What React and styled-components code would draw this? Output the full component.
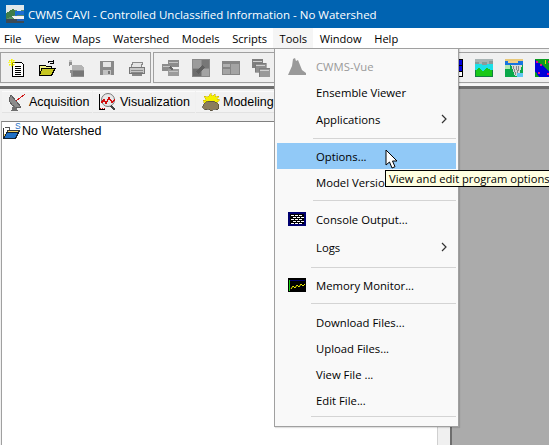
import React from "react";
import styled, { createGlobalStyle } from "styled-components";

const GlobalStyle = createGlobalStyle`
  html, body {
    margin: 0;
    padding: 0;
    background: #ababab;
  }
  * {
    box-sizing: border-box;
  }
`;

const UI_FONT = `"Open Sans", "Noto Sans", sans-serif`;
const JAVA_FONT = `"Liberation Sans", Arial, sans-serif`;

const Window = styled.div`
  position: relative;
  width: 549px;
  height: 445px;
  overflow: hidden;
  display: flex;
  flex-direction: column;
  background: #ababab;
  font-family: ${UI_FONT};
`;

const TitleBar = styled.div`
  height: 28px;
  flex: none;
  display: flex;
  align-items: center;
  gap: 4px;
  padding-left: 6px;
  background: #0063b1;
  color: #fff;
  font-size: 11.5px;
  white-space: nowrap;
`;

const MenuBar = styled.div`
  height: 20px;
  flex: none;
  display: flex;
  padding-left: 4px;
  background: #fff;
`;

const MenuTitle = styled.div`
  height: 20px;
  padding: 0 6.3px;
  display: flex;
  align-items: center;
  font-size: 11.1px;
  color: #000;
  background: ${(p) => (p.$open ? "#f5f5f5" : "transparent")};
  &:first-child {
    padding: 0 7.5px 0 0;
  }
`;

const Toolbar = styled.div`
  height: 38px;
  flex: none;
  display: flex;
  gap: 2px;
  padding-top: 3px;
  background: #f0f0f0;
  border-top: 1px solid #a0a0a0;
  border-bottom: 2px solid #f7f7f7;
`;

const ToolGroup = styled.div`
  height: 31px;
  flex: none;
  width: ${(p) => p.$width}px;
  display: flex;
  align-items: center;
  gap: 12px;
  padding-left: ${(p) => p.$pad}px;
  border: 1px solid #a0a0a0;
  border-right-width: ${(p) => (p.$open ? 0 : 1)}px;
`;

const Workspace = styled.div`
  flex: 1;
  min-height: 0;
  display: flex;
  border-top: 3px solid #6e6e6e;
`;

const LeftPane = styled.div`
  width: 437px;
  flex: none;
  display: flex;
  flex-direction: column;
  background: #f0f0f0;
`;

const TabStrip = styled.div`
  height: 32px;
  flex: none;
  display: flex;
  gap: 1px;
  padding: 2px 0 8px 2px;
`;

const Tab = styled.div`
  width: ${(p) => p.$width}px;
  display: flex;
  align-items: center;
  gap: 3px;
  padding-left: 6px;
  background: #f2f2f2;
  border-top: 1px solid #fbfbfb;
  border-bottom: 1px solid #e2e2e2;
  font-family: ${JAVA_FONT};
  font-size: 12.5px;
  color: #000;
`;

const Tree = styled.div`
  flex: 1;
  margin-left: 1px;
  padding-left: 1px;
  background: #fff;
  border-top: 1px solid #808080;
  border-left: 1px solid #a0a0a0;
`;

const TreeRow = styled.div`
  display: flex;
  align-items: center;
  gap: 1px;
  font-family: ${JAVA_FONT};
  font-size: 12.5px;
  color: #000;
`;

const Splitter = styled.div`
  width: 15px;
  flex: none;
  background: #f0f0f0;
  border-left: 1px solid #d0d0d0;
  border-right: 2px solid #6e6e6e;
`;

const Desktop = styled.div`
  flex: 1;
  background: #ababab;
`;

const PopupMenu = styled.div`
  position: absolute;
  left: 274px;
  top: 48px;
  width: 185px;
  height: 379px;
  padding: 4px 2px 0 2px;
  background: #f9f9f9;
  border: 1px solid #a0a0a0;
  box-shadow: 1px 1px 1px rgba(0, 0, 0, 0.12);
`;

const MenuRow = styled.div`
  height: ${(p) => p.$height || 26}px;
  display: flex;
  align-items: center;
  font-size: 11.3px;
  color: ${(p) => (p.$disabled ? "#9a9a9a" : "#000")};
  background: ${(p) => (p.$active ? "#91c9f7" : "transparent")};
`;

const IconSlot = styled.div`
  width: 39px;
  flex: none;
  display: flex;
  justify-content: center;
  padding-left: 1px;
`;

const RowLabel = styled.span`
  flex: 1;
  white-space: nowrap;
`;

const Chevron = styled.svg`
  width: 6px;
  height: 10px;
  margin-right: 9px;
  flex: none;
`;

const Separator = styled.div`
  height: ${(p) => p.$height || 12}px;
  display: flex;
  align-items: center;
  padding-left: ${(p) => p.$inset || 36}px;
  &::after {
    content: "";
    flex: 1;
    height: 1px;
    background: #d4d4d4;
  }
`;

const Tooltip = styled.div`
  position: absolute;
  left: 385px;
  top: 170px;
  width: 180px;
  height: 17px;
  padding-left: 3px;
  display: flex;
  align-items: center;
  background: #ffffe1;
  border: 1px solid #000;
  font-size: 11.2px;
  white-space: nowrap;
  color: #000;
`;

const Pointer = styled.svg`
  position: absolute;
  left: 385px;
  top: 149px;
  width: 14px;
  height: 21px;
`;

const Cells = ({ size = 18, view = 18, children }) => (
  <svg width={size} height={size} viewBox={`0 0 ${view} ${view}`} shapeRendering="crispEdges">
    {children}
  </svg>
);

const AppIcon = () => (
  <Cells>
    <rect width="18" height="18" fill="#5b8f6a" />
    <path d="M0 0h18v5l-6 1-5-2-7 4z" fill="#dfe8ea" />
    <path d="M0 8l7-4 5 3-5 4-7 3z" fill="#3f7d4a" />
    <path d="M9 6h9v4h-6l-3 1z" fill="#1d6fd0" />
    <path d="M6 11h12v3H8z" fill="#f2f2f2" />
    <path d="M0 14h18v4H0z" fill="#3b4a55" />
    <path d="M11 14h7v2h-7z" fill="#1e5fb5" />
  </Cells>
);

const NewIcon = () => (
  <Cells>
    <path d="M4.500 3.500h9l2 2v12h-11z" fill="#fff" stroke="#000" />
    <path d="M7 7h6M7 9h6M7 11h6M7 13h6M7 15h6" stroke="#000" />
    <path d="M0 3h7M3 0h1v7h-1zM1 1h1v1H1zM5 1h1v1H5zM1 5h1v1H1zM5 5h1v1H5z" stroke="#f4f400" fill="#f4f400" strokeWidth=".6" />
  </Cells>
);

const OpenIcon = () => (
  <Cells>
    <path d="M1.500 6.500h6l1 1h5v8h-12z" fill="#f3f388" stroke="#000" />
    <path d="M4 9.500h13l-3.500 7h-12z" fill="#c6c620" stroke="#000" />
    <path d="M10 4c1-2 3-2.500 5-1.500M15 1v3h-3" fill="none" stroke="#000" />
  </Cells>
);

const GreyOpenIcon = () => (
  <Cells>
    <path d="M1 3h3v3H2v5h14v7H3z" fill="#8f8f8f" />
    <path d="M4 6h9l3 2v3H4z" fill="#b4b4b4" />
    <path d="M1 1h3v2H1z" fill="#c8c8c8" />
    <path d="M5 12h11v5H5z" fill="#777" />
  </Cells>
);

const GreySaveIcon = () => (
  <Cells>
    <rect x="2" y="2" width="14" height="14" fill="#8a8a8a" />
    <rect x="5" y="3" width="8" height="5" fill="#e4e4e4" />
    <rect x="5" y="11" width="8" height="5" fill="#c2c2c2" />
    <rect x="10" y="12" width="2" height="3" fill="#777" />
  </Cells>
);

const GreyPrintIcon = () => (
  <Cells>
    <path d="M5 3h10l-2 5H3z" fill="#e4e4e4" stroke="#8a8a8a" />
    <path d="M1.500 8.500h15v6h-15z" fill="#c6c6c6" stroke="#777" />
    <path d="M3 11h12M3 13h12" stroke="#8a8a8a" />
    <path d="M4 15h10v1.500H4z" fill="#888" />
  </Cells>
);

const GreyLinkedIcon = () => (
  <Cells>
    <rect x="6" y="1" width="11" height="7" fill="#8c8c8c" />
    <rect x="0" y="5" width="10" height="7" fill="#8c8c8c" />
    <rect x="6" y="10" width="11" height="7" fill="#9b9b9b" />
    <path d="M7 3h9M1 7h8M7 12h9" stroke="#c4c4c4" />
    <path d="M8 8l3 3" stroke="#666" strokeWidth="2" />
  </Cells>
);

const GreyTileIcon = () => (
  <Cells>
    <rect width="18" height="18" fill="#8a8a8a" />
    <rect x="1" y="1" width="8" height="8" fill="#9c9c9c" />
    <rect x="10" y="1" width="7" height="8" fill="#777" />
    <rect x="1" y="10" width="8" height="7" fill="#6e6e6e" />
    <rect x="10" y="10" width="7" height="7" fill="#a4a4a4" />
    <path d="M4 13l6-7 3 2-6 7z" fill="#5f5f5f" />
  </Cells>
);

const GreySplitIcon = () => (
  <Cells>
    <rect y="2" width="18" height="14" fill="#868686" />
    <rect x="1" y="5" width="7" height="3" fill="#b0b0b0" />
    <rect x="1" y="10" width="7" height="5" fill="#a4a4a4" />
    <rect x="9" y="5" width="8" height="10" fill="#a4a4a4" />
  </Cells>
);

const GreyCascadeIcon = () => (
  <Cells>
    <rect y="0" width="11" height="9" fill="#7f7f7f" />
    <rect x="3" y="4" width="11" height="9" fill="#8e8e8e" stroke="#666" strokeWidth=".5" />
    <rect x="7" y="9" width="11" height="9" fill="#999" stroke="#666" strokeWidth=".5" />
    <path d="M1 2h9M4 6h9M8 11h9" stroke="#d0d0d0" />
  </Cells>
);

const GridIcon = () => (
  <Cells>
    <rect width="18" height="18" fill="#000" />
    <rect x="1" y="1" width="7" height="5" fill="#0000e0" />
    <rect x="10" y="1" width="7" height="5" fill="#0000e0" />
    <rect x="1" y="7" width="7" height="5" fill="#0000e0" />
    <rect x="10" y="7" width="7" height="5" fill="#0000e0" />
    <rect x="1" y="13" width="7" height="4" fill="#fff" />
    <rect x="10" y="13" width="7" height="4" fill="#fff" />
  </Cells>
);

const LandscapeIcon = () => (
  <Cells>
    <rect width="18" height="18" fill="#1de0e8" />
    <rect width="18" height="5" fill="#a8b4b4" />
    <path d="M0 3h4v2H0zM7 3h5v3H7zM14 2h4v3h-4z" fill="#8a9a98" />
    <path d="M0 12l4-3 4 3 4-3 6 3v6H0z" fill="#18c818" />
    <path d="M0 11h1v7H0zM17 11h1v7h-1zM0 17h18v1H0z" fill="#108040" />
  </Cells>
);

const DamIcon = () => (
  <Cells>
    <rect width="18" height="18" fill="#0aa84a" />
    <rect width="18" height="2" fill="#e8c878" />
    <rect y="2" width="18" height="4" fill="#1874e0" />
    <path d="M3 2h10v2H3z" fill="#f0d088" />
    <path d="M6 6h11l-3 11H10z" fill="#d8d8d8" />
    <path d="M8 7l3 9M11 7l2 8M14 7l-1 5" stroke="#8a8a8a" />
    <path d="M0 6h5v4H0z" fill="#b0e8b0" />
    <path d="M12 14h6v4h-6z" fill="#60c8f0" />
  </Cells>
);

const PlanIcon = () => (
  <Cells>
    <rect width="18" height="18" fill="#0a9a20" />
    <path d="M0 1l11 8 7 9H4L0 12z" fill="#0000d8" />
    <path d="M1 2h2v2H1zM5 5h2v2H5zM13 2h2v2h-2zM15 7h2v2h-2zM3 13h2v2H3zM12 14h2v2h-2z" fill="#e8008a" />
    <path d="M10 1h1v4h-1zM14 11h3v1h-3z" fill="#d8e800" />
  </Cells>
);

const DishIcon = () => (
  <Cells>
    <path d="M3 2c-2 3-2 7 1 10s7 3 9 2z" fill="#8c8c8c" stroke="#5f5f5f" />
    <path d="M5 13l-2 5h7l-2-4z" fill="#6f6f6f" />
    <path d="M8 8L17 1" stroke="#d01818" />
  </Cells>
);

const LensIcon = () => (
  <Cells>
    <circle cx="9" cy="7" r="6.500" fill="#e8e8e8" stroke="#777" shapeRendering="auto" />
    <path d="M2 10l3-3 2 3 3-5 3 4 3-2" fill="none" stroke="#d01010" strokeWidth="1.500" />
    <path d="M12 13l4 4" stroke="#444" strokeWidth="2" />
    <path d="M0 1v16M0 16h6" stroke="#000" />
    <path d="M1 15h5" stroke="#d01010" strokeDasharray="1 1" />
  </Cells>
);

const WeatherIcon = () => (
  <Cells>
    <path d="M9 0l1 3 3-2 0 3 4-1-2 3 3 1-3 2 2 3H3L1 7l3 0-2-4 4 1z" fill="#f4f000" stroke="#c8a800" strokeWidth=".5" />
    <path d="M1 15c-1-4 3-7 8-7s8 3 8 7l-2 2-3-1-3 2-3-2-3 1z" fill="#8b7d5c" stroke="#4d4636" strokeWidth=".7" />
  </Cells>
);

const WatershedIcon = () => (
  <Cells>
    <path d="M0.500 5.500v11h12l4-8H5l-3 6" fill="#f3d060" stroke="#333" />
    <path d="M0.500 16.500L4 10h12l-4 6.500z" fill="#1f6fc4" stroke="#123" />
    <path d="M2 5.500h4l1 2" fill="none" stroke="#555" />
    <text x="12" y="7" fontSize="8.500" fontFamily="Liberation Sans" fill="#1f6fc4">S</text>
  </Cells>
);

const VueIcon = () => (
  <svg width="18" height="18" viewBox="0 0 18 18">
    <path d="M0 18L4 9 5 2 7 1 8 4 10 3 12 8 14 13 18 16V18z" fill="#9a9a9a" />
  </svg>
);

const ConsoleIcon = () => (
  <Cells>
    <rect y="2" width="18" height="14" fill="#000070" />
    <rect x="2" y="4" width="14" height="10" fill="#000" />
    <path d="M3 5h12M3 9h12M3 13h12" stroke="#fff" strokeDasharray="3 1" />
    <path d="M5 7h11M5 11h11" stroke="#fff" strokeDasharray="3 1" />
  </Cells>
);

const MemoryIcon = () => (
  <Cells>
    <rect y="2" width="18" height="14" fill="#000" />
    <path d="M1 4h16" stroke="#000070" />
    <path d="M1 4v11" stroke="#18d018" />
    <path d="M3 13l2-3 2 2 2-3 2 2 2-3 2 2 2-2" fill="none" stroke="#f0f000" shapeRendering="auto" />
  </Cells>
);

const fileIcons = [
  <NewIcon key="new" />,
  <OpenIcon key="open" />,
  <GreyOpenIcon key="greyopen" />,
  <GreySaveIcon key="save" />,
  <GreyPrintIcon key="print" />,
];

const windowIcons = [
  <GreyLinkedIcon key="linked" />,
  <GreyTileIcon key="tile" />,
  <GreySplitIcon key="split" />,
  <GreyCascadeIcon key="cascade" />,
];

const dataIcons = [
  <GreySplitIcon key="a" />,
  <GreySplitIcon key="b" />,
  <GreySplitIcon key="c" />,
  <GreySplitIcon key="d" />,
  <GreySplitIcon key="e" />,
  <GridIcon key="grid" />,
  <LandscapeIcon key="land" />,
  <DamIcon key="dam" />,
  <PlanIcon key="plan" />,
];

const menus = ["File", "View", "Maps", "Watershed", "Models", "Scripts", "Tools", "Window", "Help"];

const Arrow = () => (
  <Chevron viewBox="0 0 6 10">
    <path d="M1 1l4 4-4 4" fill="none" stroke="#333" strokeWidth="1.200" />
  </Chevron>
);

function Item({ icon, label, submenu, ...rest }) {
  return (
    <MenuRow {...rest}>
      <IconSlot>{icon}</IconSlot>
      <RowLabel>{label}</RowLabel>
      {submenu && <Arrow />}
    </MenuRow>
  );
}

export default function App() {
  return (
    <Window>
      <GlobalStyle />
      <TitleBar>
        <AppIcon />
        CWMS CAVI - Controlled Unclassified Information - No Watershed
      </TitleBar>
      <MenuBar>
        {menus.map((m) => (
          <MenuTitle key={m} $open={m === "Tools"}>
            {m}
          </MenuTitle>
        ))}
      </MenuBar>
      <Toolbar>
        <ToolGroup $width={151} $pad={7}>
          {fileIcons}
        </ToolGroup>
        <ToolGroup $width={137} $pad={8}>
          {windowIcons}
        </ToolGroup>
        <ToolGroup $width={280} $pad={2} $open>
          {dataIcons}
        </ToolGroup>
      </Toolbar>
      <Workspace>
        <LeftPane>
          <TabStrip>
            <Tab $width={90}>
              <DishIcon />
              Acquisition
            </Tab>
            <Tab $width={102}>
              <LensIcon />
              Visualization
            </Tab>
            <Tab $width={80}>
              <WeatherIcon />
              Modeling
            </Tab>
          </TabStrip>
          <Tree>
            <TreeRow>
              <WatershedIcon />
              No Watershed
            </TreeRow>
          </Tree>
        </LeftPane>
        <Splitter />
        <Desktop />
      </Workspace>

      <PopupMenu>
        <Item icon={<VueIcon />} label="CWMS-Vue" $disabled />
        <Item label="Ensemble Viewer" />
        <Item label="Applications" submenu $height={28} />
        <Separator $height={10} $inset={36} />
        <Item label="Options..." $active />
        <Item label="Model Versions" />
        <Separator $height={11} $inset={36} />
        <Item icon={<ConsoleIcon />} label="Console Output..." />
        <Item label="Logs" submenu $height={30} />
        <Separator $height={10} $inset={34} />
        <Item icon={<MemoryIcon />} label="Memory Monitor..." />
        <Separator $height={11} $inset={34} />
        <Item label="Download Files..." />
        <Item label="Upload Files..." />
        <Item label="View File ..." />
        <Item label="Edit File..." />
        <Separator $height={6} $inset={34} />
      </PopupMenu>

      <Tooltip>View and edit program options</Tooltip>
      <Pointer viewBox="0 0 14 21">
        <path d="M1 1v15l3.500-3 2.500 6 3-1.300-2.500-5.700H12z" fill="#fff" stroke="#000" />
      </Pointer>
    </Window>
  );
}
